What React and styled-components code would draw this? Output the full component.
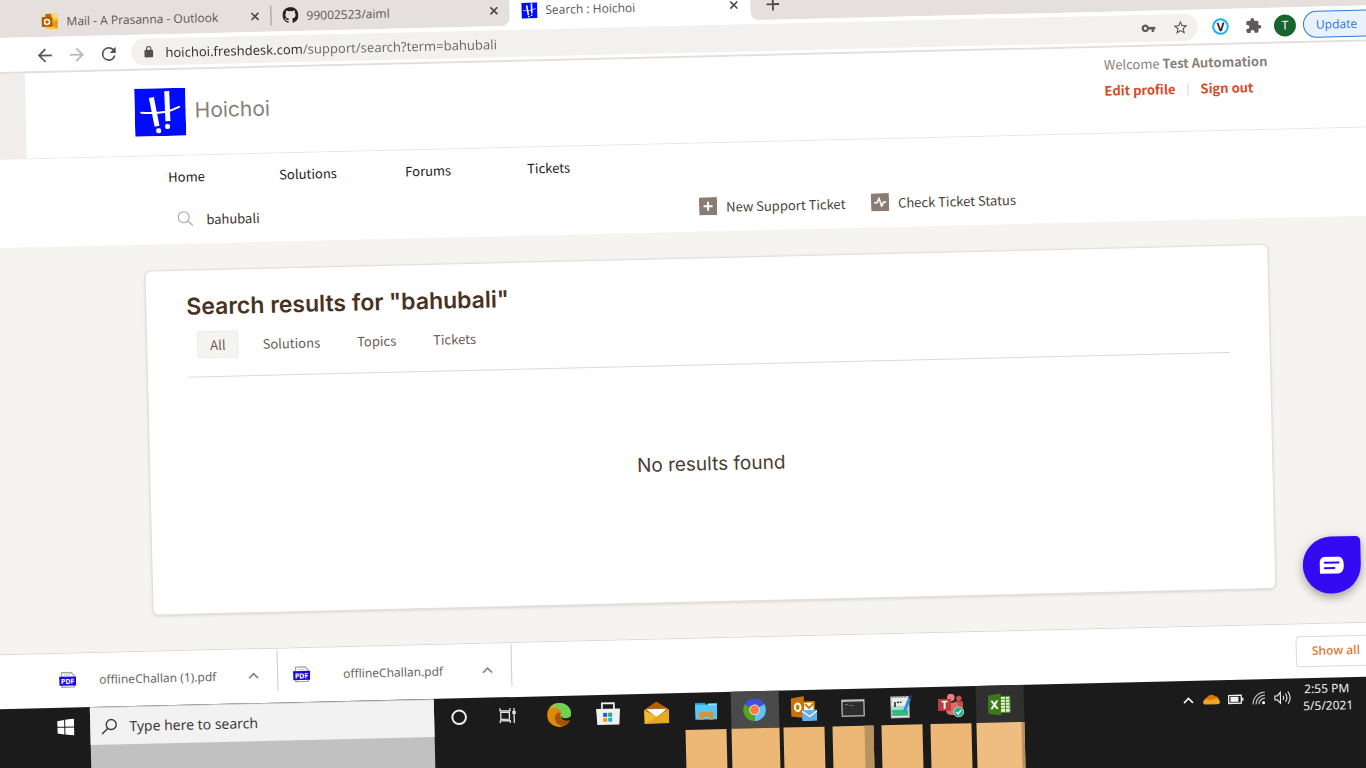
import React from "react";
import styled, { createGlobalStyle } from "styled-components";

const system = `"Noto Sans", "Open Sans", sans-serif`;
const caption = `"Open Sans", "Noto Sans", sans-serif`;
const body = `"Noto Sans CJK SC", "Noto Sans", sans-serif`;
const display = `Inter, Lato, sans-serif`;

const Global = createGlobalStyle`
  *, *::before, *::after { box-sizing: border-box; }
  html, body { margin: 0; height: 100%; overflow: hidden; }
  body { background: #fff; font-family: ${system}; }
  button, input { font: inherit; color: inherit; border: 0; padding: 0; margin: 0; background: none; outline: 0; }
  a { color: inherit; text-decoration: none; }
  h1, p, ul { margin: 0; padding: 0; }
  svg { display: block; flex: none; }
`;

const Desk = styled.div`
  height: 100vh;
  overflow: hidden;
`;

/* The desktop is tilted; it bleeds past the window so that no corner is bare. */
const Screen = styled.div`
  display: flex;
  flex-direction: column;
  width: calc(100% + 48px);
  height: calc(100vh + 40px);
  margin-left: -24px;
  transform: rotate(-1.36deg);
  transform-origin: 24px 0;
`;

/* ---------- browser chrome ---------- */

const TabStrip = styled.div`
  display: flex;
  height: 38px;
  background: #fff;
`;

const TabGroup = styled.div`
  display: flex;
  align-items: center;
  background: #e5e0de;
  height: 38px;
  padding-top: 6px;
  ${(p) => (p.$side === "left"
    ? "padding-left: 65px; width: 533px; border-bottom-right-radius: 8px;"
    : "flex: 1; padding-left: 14px; border-bottom-left-radius: 8px;")}
`;

const Tab = styled.div`
  display: flex;
  align-items: center;
  gap: 8px;
  width: ${(p) => p.$width}px;
  height: 32px;
  padding-right: 8px;
  font-family: ${caption};
  font-size: 12px;
  line-height: 13px;
  color: #5a5654;
`;

const ActiveTab = styled(Tab)`
  height: 38px;
  padding: 7px 9px 0 12px;
`;

const TabTitle = styled.span`
  flex: 1;
  white-space: nowrap;
`;

const TabRule = styled.span`
  width: 1px;
  height: 20px;
  margin-right: 11px;
  background: #999391;
`;

const IconButton = styled.button`
  display: grid;
  place-items: center;
  flex: none;
  width: ${(p) => p.$size || 16}px;
  height: ${(p) => p.$size || 16}px;
`;

const Toolbar = styled.div`
  display: flex;
  align-items: center;
  height: 36px;
  padding: 1px 8px 0 57px;
  border-bottom: 2px solid #e2dedc;
  background: #fff;
`;

const NavButtons = styled.div`
  display: flex;
  gap: 12px;
  width: 97px;
`;

const Omnibox = styled.label`
  display: flex;
  align-items: center;
  flex: 1;
  height: 27px;
  padding: 0 2px 0 11px;
  border-radius: 14px;
  background: #f3f1f0;
`;

const Address = styled.input`
  flex: 1;
  min-width: 0;
  margin-left: 10px;
  font-size: 13px;
  color: #555;
  background: linear-gradient(90deg, #333 138px, #6c6a68 138px);
  -webkit-background-clip: text;
  background-clip: text;
  -webkit-text-fill-color: transparent;
`;

const Extensions = styled.div`
  display: flex;
  align-items: center;
  gap: 6px;
  margin-left: 12px;
`;

const Avatar = styled.button`
  width: 22px;
  height: 22px;
  margin: 0 7px 0 4px;
  border-radius: 50%;
  background: #18652e;
  color: #fff;
  font-size: 12px;
  line-height: 22px;
`;

const UpdateButton = styled.button`
  width: 80px;
  height: 27px;
  padding-left: 12px;
  border: 1px solid #2d7be0;
  border-radius: 14px;
  background: #e9f2fc;
  color: #2a74dc;
  font-family: ${caption};
  font-size: 12px;
  text-align: left;
`;

/* ---------- help desk page ---------- */

const Gutter = styled.div`
  padding-left: 47px;
  background: #f0edeb;
`;

const Header = styled.header`
  display: flex;
  justify-content: space-between;
  height: 86px;
  padding: 0 130px 0 109px;
  border-bottom: 1px solid #e8e6e5;
  background: #fff;
  font-family: ${body};
`;

const Brand = styled.a`
  display: flex;
  align-items: flex-start;
  gap: 9px;
  padding-top: 18px;
  color: #8a8078;
  font-family: ${display};
  font-size: 21px;
  line-height: 46px;
`;

const Account = styled.div`
  width: 158px;
  padding-top: 5px;
  color: #8a8078;
  font-size: 13px;
  line-height: 24px;
  white-space: nowrap;
`;

const AccountLinks = styled.div`
  display: flex;
  align-items: center;
  gap: 12px;
  padding-top: 2px;
  color: #d84a26;
  font-weight: 700;
`;

const LinkRule = styled.span`
  width: 1px;
  height: 13px;
  background: #d9d4d2;
`;

const NavArea = styled.div`
  height: 88px;
  padding-left: 188px;
  background: #fff;
  font-family: ${body};
  font-size: 13px;
`;

const MainNav = styled.nav`
  display: grid;
  grid-template-columns: 111px 126px 122px auto;
  height: 42px;
  line-height: 42px;
  color: #1c1b1a;
`;

const SupportRow = styled.div`
  display: flex;
  align-items: center;
  height: 42px;
  padding-left: 8px;
  color: #4c3f36;
`;

const SiteSearch = styled.label`
  display: flex;
  align-items: center;
  gap: 13px;
  width: 522px;
`;

const SiteInput = styled.input`
  width: 300px;
  color: #3c322c;
`;

const SupportLink = styled.a`
  display: flex;
  align-items: center;
  gap: 9px;
  width: 172px;
  white-space: nowrap;
`;

const Main = styled.main`
  position: relative;
  display: flex;
  flex: 1;
  padding: 26px 128px 35px 162px;
  background: #f6f4f1;
`;

const Card = styled.section`
  display: flex;
  flex-direction: column;
  flex: 1;
  padding: 20px 40px;
  border: 1px solid #e2dedb;
  border-radius: 6px;
  background: #fff;
  box-shadow: 0 1px 3px rgba(70, 50, 40, 0.15);
`;

const Heading = styled.h1`
  color: #493222;
  font-family: ${display};
  font-size: 23px;
  font-weight: 600;
  line-height: 32px;
`;

const Filters = styled.div`
  display: flex;
  gap: 11px;
  padding: 9px 0 18px 10px;
  border-bottom: 1px solid #dcdad8;
`;

const Filter = styled.button`
  height: 27px;
  padding: 0 12px;
  border: 1px solid ${(p) => (p.$on ? "#edeae6" : "transparent")};
  border-radius: 2px;
  background: ${(p) => (p.$on ? "#f6f4f1" : "transparent")};
  color: #6a5a50;
  font-family: ${body};
  font-size: 13px;
  line-height: 25px;
`;

const Empty = styled.p`
  padding-top: 84px;
  color: #493b32;
  font-family: ${display};
  font-size: 19px;
  line-height: 30px;
  text-align: center;
`;

const ChatButton = styled.button`
  position: absolute;
  right: 43px;
  bottom: 29px;
  display: grid;
  place-items: center;
  width: 58px;
  height: 57px;
  border-radius: 29px 5px 29px 29px;
  background: #330af2;
  box-shadow: 0 4px 8px rgba(0, 0, 0, 0.3), 0 0 20px rgba(0, 0, 0, 0.08);
`;

/* ---------- download shelf ---------- */

const Shelf = styled.div`
  display: flex;
  align-items: center;
  height: 55px;
  padding: 0 8px 0 67px;
  border-top: 1px solid #dad6d4;
  background: #fff;
  color: #6a6664;
  font-family: ${caption};
  font-size: 12px;
`;

const Download = styled.div`
  display: flex;
  align-items: center;
  width: ${(p) => p.$width}px;
  height: 42px;
  margin-bottom: 10px;
  margin-right: 15px;
  padding: 8px 16px 0 0;
  border-right: 1px solid #cfcccb;
`;

const FileName = styled.a`
  flex: 1;
  padding-left: ${(p) => p.$inset}px;
  font-family: ${system};
  font-size: 12px;
  white-space: nowrap;
`;

const ShowAll = styled.button`
  width: 102px;
  height: 31px;
  margin-left: auto;
  padding: 0 0 2px 15px;
  border: 1px solid #dedad8;
  border-radius: 4px;
  color: #e2773f;
  font-weight: 600;
  line-height: 27px;
  text-align: left;
`;

/* ---------- task bar ---------- */

const Taskbar = styled.footer`
  display: flex;
  flex: none;
  height: 99px;
  background: #1b1b1b;
`;

const Start = styled.button`
  display: flex;
  align-items: center;
  width: 97px;
  height: 38px;
  padding-left: 64px;
`;

const FindBox = styled.div`
  width: 344px;
  padding-top: 1px;
  background: #c1c1c1;
`;

const FindField = styled.label`
  display: flex;
  align-items: center;
  gap: 12px;
  height: 37px;
  padding-left: 11px;
  background: #f2f2f2;
`;

const FindInput = styled.input`
  flex: 1;
  min-width: 0;
  font-size: 14px;
  &::placeholder { color: #3c3c3c; opacity: 1; }
`;

const Apps = styled.div`
  display: flex;
  margin-left: ${(p) => p.$lead || 0}px;
`;

const AppSlot = styled.div`
  display: flex;
  flex-direction: column;
  align-items: center;
  width: 49px;
`;

const AppButton = styled.button`
  display: grid;
  place-items: center;
  width: 48px;
  height: 37px;
  background: ${(p) => p.$tone || "transparent"};
`;

const Preview = styled.span`
  width: ${(p) => (p.$wide ? 48 : 41)}px;
  flex: 1;
  background: ${(p) => p.$tone || "#edb876"};
  border-right: ${(p) => p.$edge || 0}px solid #b9935f;
`;

const Tray = styled.div`
  display: flex;
  align-items: center;
  gap: 8px;
  height: 38px;
  margin-left: auto;
  padding-right: 56px;
  color: #eee;
`;

const Clock = styled.time`
  width: 48px;
  margin-left: 3px;
  font-size: 12px;
  line-height: 17px;
  text-align: center;
  white-space: nowrap;
`;

/* ---------- drawings ---------- */

const Svg = ({ s = 16, w, h, box, children, ...rest }) => (
  <svg width={w || s} height={h || s} viewBox={box || `0 0 ${w || s} ${h || s}`} fill="none" aria-hidden="true" {...rest}>
    {children}
  </svg>
);

const Letter = styled.text`
  font-family: ${system};
  font-weight: 700;
  text-anchor: middle;
`;

const Close = () => (
  <IconButton aria-label="Close tab">
    <Svg s={9} stroke="#4a4644" strokeWidth="1.600"><path d="M1 1l7 7M8 1l-7 7" /></Svg>
  </IconButton>
);

const HoichoiMark = ({ w, h }) => (
  <Svg w={w} h={h} box="0 0 51 48" preserveAspectRatio="none">
    <path fill="#000bff" d="M0 0h51v48H0z" />
    <g stroke="#fff">
      <path strokeWidth="5" d="M17 9l5 29M32.500 3l.5 30" />
      <path strokeWidth="2" strokeLinecap="round" d="M6.500 24c13 1.500 27 .5 38-5" />
    </g>
    <rect x="21" y="40" width="5" height="5" rx="2" fill="#fff" />
    <rect x="30" y="36" width="5" height="5" rx="2" fill="#fff" />
  </Svg>
);

const OutlookTab = () => (
  <Svg s={17} box="0 0 17 17">
    <path fill="#f3b72b" d="M4 1h12v11H4z" /><path fill="#b86a08" d="M4 1h6v4H4z" /><path fill="#ffd95e" d="M10 1h6v5h-6z" />
    <path fill="#e39712" d="M4 16l12-9v9z" /><path fill="#ffc83d" d="M4 9l12 7H4z" />
    <rect y="4" width="11" height="10" rx="1" fill="#b85c00" /><circle cx="5.500" cy="9" r="2.500" stroke="#fff" strokeWidth="1.500" />
  </Svg>
);

const GitHub = () => (
  <Svg s={16} box="0 0 16 16">
    <path fill="#24211f" d="M8 0C3.580 0 0 3.580 0 8c0 3.540 2.290 6.530 5.470 7.590.4.070.55-.17.55-.38 0-.19-.01-.82-.01-1.490-2.010.37-2.530-.49-2.690-.94-.09-.23-.48-.94-.82-1.130-.28-.15-.68-.52-.01-.53.63-.01 1.080.58 1.230.82.72 1.210 1.870.87 2.330.66.07-.52.28-.87.51-1.070-1.780-.2-3.640-.89-3.640-3.950 0-.87.31-1.590.82-2.150-.08-.2-.36-1.020.08-2.120 0 0 .67-.21 2.200.82a7.600 7.600 0 0 1 4 0c1.530-1.040 2.200-.82 2.200-.82.44 1.100.16 1.920.08 2.120.51.56.82 1.270.82 2.150 0 3.070-1.870 3.750-3.650 3.950.29.25.54.73.54 1.480 0 1.070-.01 1.930-.01 2.200 0 .21.15.46.55.38A8.010 8.010 0 0 0 16 8c0-4.420-3.580-8-8-8z" />
  </Svg>
);

const Arrow = ({ back }) => (
  <Svg s={21} box="0 0 24 24" fill={back ? "#5b5654" : "#bcb7b5"}>
    <path d={back ? "M20 11H7.830l5.590-5.590L12 4l-8 8 8 8 1.410-1.410L7.830 13H20z" : "M4 11h12.170l-5.590-5.590L12 4l8 8-8 8-1.410-1.410L16.170 13H4z"} />
  </Svg>
);

const Reload = () => (
  <Svg s={21} box="0 0 24 24" fill="#5b5654">
    <path d="M17.650 6.350A7.960 7.960 0 0 0 12 4a8 8 0 1 0 7.730 10h-2.080A6 6 0 1 1 12 6c1.660 0 3.140.69 4.220 1.780L13 11h7V4z" />
  </Svg>
);

const Lock = () => (
  <Svg s={13} box="0 0 24 24" fill="#55504e">
    <path fillRule="evenodd" d="M18 8h-1V6A5 5 0 0 0 7 6v2H6a2 2 0 0 0-2 2v10a2 2 0 0 0 2 2h12a2 2 0 0 0 2-2V10a2 2 0 0 0-2-2zM9 8V6a3 3 0 0 1 6 0v2z" />
  </Svg>
);

const KeyIcon = () => (
  <Svg s={15} box="0 0 24 24" fill="#5f5b58">
    <path fillRule="evenodd" d="M12.650 10A6 6 0 1 0 12.650 14H17v4h4v-4h2v-4H12.650zM7 14.500a2.500 2.500 0 1 1 0-5 2.500 2.500 0 0 1 0 5z" />
  </Svg>
);

const Star = () => (
  <Svg s={17} box="0 0 24 24" fill="#5f5b58">
    <path fillRule="evenodd" d="M22 9.240l-7.190-.62L12 2 9.190 8.630 2 9.240l5.460 4.730L5.820 21 12 17.270 18.180 21l-1.630-7.030zM12 15.400l-3.760 2.270 1-4.280-3.320-2.880 4.380-.38L12 6.100l1.710 4.040 4.380.38-3.320 2.880 1 4.280z" />
  </Svg>
);

const VBadge = () => (
  <Svg s={17} box="0 0 17 17">
    <circle cx="8.500" cy="8.500" r="7.300" fill="#fff" stroke="#16b4ee" strokeWidth="2" />
    <Letter x="8.500" y="13" fontSize="12" fill="#1f2430">V</Letter>
  </Svg>
);

const Puzzle = () => (
  <Svg s={17} box="0 0 24 24" fill="#5f5b58">
    <path d="M20.500 11H19V7a2 2 0 0 0-2-2h-4V3.500a2.500 2.500 0 0 0-5 0V5H4a2 2 0 0 0-2 2v3.800h1.500a2.700 2.700 0 0 1 0 5.400H2V20c0 1.100.9 2 2 2h3.800v-1.500a2.700 2.700 0 0 1 5.400 0V22H17a2 2 0 0 0 2-2v-4h1.500a2.500 2.500 0 0 0 0-5z" />
  </Svg>
);

const Glass = () => (
  <Svg s={16} stroke="#aaa5a3" strokeWidth="1.100"><circle cx="6.500" cy="6.500" r="5.500" /><path d="M10.500 10.500l5 4.500" /></Svg>
);

const PlusBox = () => (
  <Svg s={18}><path fill="#8a7c72" d="M0 0h18v18H0z" /><path d="M9 4.500v9M4.500 9h9" stroke="#fff" strokeWidth="2" /></Svg>
);

const PulseBox = () => (
  <Svg s={18}><path fill="#8a7c72" d="M0 0h18v18H0z" /><path d="M3 9.500h3l2-4.500 2.500 8 2-4h2.500" stroke="#fff" strokeWidth="1.600" strokeLinejoin="round" /></Svg>
);

const ChatGlyph = () => (
  <Svg w={26} h={18}>
    <path fill="#fff" d="M7 0h12c4 0 6 3 6 8.500S23 17 19 17H1V7c0-5 2-7 6-7z" />
    <path d="M6 6h14M6 11.500h9.500" stroke="#330af2" strokeWidth="2" strokeLinecap="round" />
  </Svg>
);

const Pdf = () => (
  <Svg w={17} h={17}>
    <path d="M2.500 5V1h9.500l3 3v1M2.500 13v2.500H15V13" stroke="#a9a6a5" strokeWidth="1.300" /><path d="M5 3.500h6" stroke="#c4c2c1" />
    <path fill="#1c0be0" d="M0 5h17v9H0z" />
    <Letter x="8.500" y="12.300" fontSize="7" fill="#fff">PDF</Letter>
  </Svg>
);

const Chevron = ({ color = "#85817f", size = 11 }) => (
  <Svg w={size} h={7} box="0 0 11 7" stroke={color} strokeWidth="1.700"><path d="M1 6l4.500-4.500L10 6" /></Svg>
);

const Windows = () => (
  <Svg s={17} fill="#fff"><path d="M0 2.300L7 1.300v6.700H0zM8 1.200L17 0v8H8zM0 9h7v6.700l-7-1zM8 9h9v8l-9-1.200z" /></Svg>
);

const FindGlyph = () => (
  <Svg s={16} stroke="#3a3a3a" strokeWidth="1.400"><circle cx="10" cy="6" r="5" /><path d="M6.500 9.500L.5 15.500" /></Svg>
);

const Cortana = () => <Svg s={18}><circle cx="9" cy="9" r="6.800" stroke="#f1f1f1" strokeWidth="2" /></Svg>;

const TaskView = () => (
  <Svg s={17} stroke="#e6e6e6" strokeWidth="1.300">
    <path d="M1 1v2.500h10V1M1 16v-2.500h10V16M1.700 5h8.600v7H1.700zM15 1v15" /><path fill="#e6e6e6" stroke="none" d="M13.300 4h3.400v3h-3.400z" />
  </Svg>
);

const Edge = () => (
  <Svg s={24}>
    <circle cx="12" cy="12" r="12" fill="#de890b" />
    <path fill="#b4b535" d="M2 5.500C5.500 0 13-2 19 2.500L15 8C12 4.500 7 4 2 5.500z" />
    <path fill="#6fd150" d="M9 1.500C17-2 24 4 24 10.500c0 4-3 5-6 5-3.500 0-5-1.500-4-4C15 8 12 4.500 7 4z" />
    <path fill="#a65306" d="M9 11c-3 5 0 12 7 12.200 3-1 5.500-3 7-5.700-5 2-10 0-10-5 0-1 .5-2 1-2.500-2-.5-4 0-5 1z" />
    <path fill="#1b1b1b" d="M14 12c-1 5 4.500 7.500 9 5.300L25 18v-6.500c-1 3-4 4-7 4-3 0-4.300-1.500-4-3.500z" />
  </Svg>
);

const Store = () => (
  <Svg w={24} h={24}>
    <path d="M6 8V1.500h12V8" stroke="#f2f2f2" strokeWidth="1.700" /><path fill="#f2f2f2" d="M0 7h24l-1 16H1z" />
    <path fill="#1d5bf0" d="M7 11h4v4H7z" /><path fill="#11b765" d="M12 11h4v4h-4z" /><path fill="#f29b14" d="M7 16h4v4H7z" /><path fill="#14b3ee" d="M12 16h4v4h-4z" />
  </Svg>
);

const Mail = () => (
  <Svg w={25} h={22}>
    <path fill="#b45e04" d="M0 8l12.500-8L25 8v4H0z" /><path fill="#fff" d="M2 7.500h21L12.500 16z" />
    <path fill="#f3bb2f" d="M0 8l12.500 7L25 8v14H0z" /><path fill="#dd9a17" d="M25 8v14L0 22z" opacity=".55" />
  </Svg>
);

const Explorer = () => (
  <Svg w={22} h={18}>
    <path fill="#159ddc" d="M0 0h10l1 3H0z" /><path fill="#56c8f5" d="M0 2h22v15H0z" /><path fill="#8edefb" d="M13 1h9v2h-9z" />
    <path fill="#d2953e" d="M4 17.500V9.500h14v8h-4v-3H8v3z" />
  </Svg>
);

const Chrome = () => (
  <Svg s={23}>
    <path fill="#4150dd" d="M11.500 11.500L1.500 6a11.500 11.500 0 0 1 20 0z" /><path fill="#5cc3f8" d="M11.500 11.500L21.400 6a11.500 11.500 0 0 1-10 17z" />
    <path fill="#52a51d" d="M11.500 11.500L11.300 23A11.500 11.500 0 0 1 1.600 6z" /><circle cx="11.500" cy="11.500" r="5.300" fill="#f0e8e4" /><circle cx="11.500" cy="11.500" r="4.500" fill="#ff7b42" />
  </Svg>
);

const Outlook = () => (
  <Svg w={26} h={25}>
    <path fill="#fff" stroke="#d27e09" strokeWidth="1.500" d="M12 6h11v11H12z" /><path d="M14 8l4 4 5-5" stroke="#d27e09" strokeWidth="2" />
    <path fill="#cc7205" d="M0 2l13-2v22L0 20z" /><ellipse cx="6.700" cy="11" rx="2.800" ry="3.700" stroke="#fff" strokeWidth="2" />
    <path fill="#65aeea" d="M11 14h15v11H11z" /><path d="M11 15l7.500 5.500L26 15" stroke="#fff" strokeWidth="1.300" />
  </Svg>
);

const Terminal = () => (
  <Svg w={24} h={18}>
    <path fill="#2c2d2e" stroke="#a5a5a5" strokeWidth="1.500" d="M1 1h22v16H1z" /><path stroke="#e8e8e8" d="M1 2h22" />
    <path d="M4 5.500h3M8 6.500h1M10 6.500h2" stroke="#777" />
  </Svg>
);

const Notepad = () => (
  <Svg w={23} h={24}>
    <path fill="#e9eeea" stroke="#aaa" d="M1 2h18v21H1z" /><path fill="#31bd82" d="M2 14h16v7H2z" /><path fill="#a8e2c5" d="M2 11h16v4H2z" />
    <path d="M3 1v2M6 1v2M9 1v2M12 1v2M15 1v2" stroke="#777" /><path d="M5 7v5M7 7.500h2M10 7.500h1.500" stroke="#222" strokeWidth="1.500" />
    <path d="M20 3l-6 14" stroke="#2b92da" strokeWidth="3" /><path d="M21.500.5L20 4" stroke="#302a68" strokeWidth="3" />
  </Svg>
);

const Teams = () => (
  <Svg w={26} h={24}>
    <circle cx="13" cy="4" r="3.800" fill="#e8807b" /><circle cx="21" cy="5" r="2.800" fill="#c85250" />
    <path fill="#c94d4c" d="M16 8h9v8c0 4-5 5-8 3z" /><path fill="#dc6b68" d="M8 9h12v8c0 6-12 6-12 0z" />
    <path fill="#b93e40" d="M0 5h13v12H0z" /><Letter x="6.500" y="15" fontSize="11" fill="#fff">T</Letter>
    <circle cx="20.500" cy="18.500" r="5" fill="#16b584" stroke="#f3d7d5" strokeWidth=".8" /><path d="M18 18.500l2 2 3.200-4" stroke="#fff" strokeWidth="1.500" />
  </Svg>
);

const Excel = () => (
  <Svg w={23} h={22}>
    <path fill="#e6efdc" stroke="#4c8b22" d="M12 3h10v16H12z" /><path d="M17.500 3v16" stroke="#4c8b22" /><path d="M13 6h9M13 9h9M13 12h9M13 15h9" stroke="#4c8b22" strokeWidth=".8" />
    <path fill="#3d7819" d="M0 2l13-2v22L0 20z" /><Letter x="6.500" y="15.500" fontSize="12" fill="#fff">X</Letter>
  </Svg>
);

const Cloud = () => (
  <Svg w={17} h={12}><path fill="#d97a05" d="M1 9a4 4 0 0 1 3-5 5 5 0 0 1 8-1c3 0 5 3 4 6z" /><path fill="#efa52a" d="M0 8c3-3 5-3 7-1l3-1c3-2 7 0 7 3 0 1-1 2-3 2H3C1 11 0 10 0 8z" /></Svg>
);

const Battery = () => (
  <Svg w={16} h={11}><path d="M.7 1.500h12.600v8H.7z" stroke="#f3f3f3" strokeWidth="1.300" /><path fill="#f3f3f3" d="M2.500 3h8v5h-8zM14 4h1.500v3H14z" /></Svg>
);

const Wifi = () => (
  <Svg s={14} stroke="#bdbdbd" strokeWidth="1.200"><path d="M1 13A12 12 0 0 1 13 1M4 13a9 9 0 0 1 9-9M7 13a6 6 0 0 1 6-6" /><circle cx="11.500" cy="11.500" r="1.500" fill="#fff" stroke="none" /></Svg>
);

const Volume = () => (
  <Svg w={18} h={14} stroke="#ededed" strokeWidth="1.100"><path d="M1 5h2.500l3-3.500v11l-3-3.500H1zM9 5q1.500 2 0 4M11.500 3q3 4 0 8M14 1q4.500 6 0 12" /></Svg>
);

const runningApps = [
  { name: "Edge", icon: Edge },
  { name: "Store", icon: Store },
  { name: "Mail", icon: Mail },
  { name: "File Explorer", icon: Explorer, preview: {} },
  { name: "Chrome", icon: Chrome, tone: "#4a4a4a", preview: { $wide: true } },
  { name: "Outlook", icon: Outlook, preview: {} },
  { name: "Command Prompt", icon: Terminal, preview: { $edge: 9 } },
  { name: "Notepad", icon: Notepad, preview: {} },
  { name: "Teams", icon: Teams, preview: {} },
  { name: "Excel", icon: Excel, tone: "#303030", preview: { $wide: true, $edge: 3, $tone: "#efbd7f" } },
];

export default function App() {
  return (
    <Desk>
      <Global />
      <Screen>
        <TabStrip>
          <TabGroup $side="left">
            <Tab $width={229}><OutlookTab /><TabTitle>Mail - A Prasanna - Outlook</TabTitle><Close /></Tab>
            <TabRule />
            <Tab $width={227}><GitHub /><TabTitle>99002523/aiml</TabTitle><Close /></Tab>
          </TabGroup>
          <ActiveTab $width={241}><HoichoiMark w={16} h={16} /><TabTitle>Search : Hoichoi</TabTitle><Close /></ActiveTab>
          <TabGroup $side="right">
            <IconButton aria-label="New tab"><Svg s={13} stroke="#4a4644" strokeWidth="1.800"><path d="M6.500 0v13M0 6.500h13" /></Svg></IconButton>
          </TabGroup>
        </TabStrip>

        <Toolbar>
          <NavButtons>
            <IconButton $size={20} aria-label="Back"><Arrow back /></IconButton>
            <IconButton $size={20} aria-label="Forward"><Arrow /></IconButton>
            <IconButton $size={20} aria-label="Reload"><Reload /></IconButton>
          </NavButtons>
          <Omnibox>
            <Lock />
            <Address aria-label="Address" defaultValue="hoichoi.freshdesk.com/support/search?term=bahubali" />
            <IconButton $size={32} aria-label="Passwords"><KeyIcon /></IconButton>
            <IconButton $size={32} aria-label="Bookmark"><Star /></IconButton>
          </Omnibox>
          <Extensions>
            <IconButton $size={20} aria-label="Extension"><VBadge /></IconButton>
            <IconButton $size={34} aria-label="Extensions"><Puzzle /></IconButton>
          </Extensions>
          <Avatar>T</Avatar>
          <UpdateButton>Update</UpdateButton>
        </Toolbar>

        <Gutter>
          <Header>
            <Brand href="#"><HoichoiMark w={51} h={48} />Hoichoi</Brand>
            <Account>
              Welcome <b>Test Automation</b>
              <AccountLinks><a href="#">Edit profile</a><LinkRule /><a href="#">Sign out</a></AccountLinks>
            </Account>
          </Header>
        </Gutter>

        <NavArea>
          <MainNav>
            <a href="#">Home</a><a href="#">Solutions</a><a href="#">Forums</a><a href="#">Tickets</a>
          </MainNav>
          <SupportRow>
            <SiteSearch><Glass /><SiteInput aria-label="Search" defaultValue="bahubali" /></SiteSearch>
            <SupportLink href="#"><PlusBox />New Support Ticket</SupportLink>
            <SupportLink href="#"><PulseBox />Check Ticket Status</SupportLink>
          </SupportRow>
        </NavArea>

        <Main>
          <Card>
            <Heading>Search results for "bahubali"</Heading>
            <Filters>
              <Filter $on>All</Filter><Filter>Solutions</Filter><Filter>Topics</Filter><Filter>Tickets</Filter>
            </Filters>
            <Empty>No results found</Empty>
          </Card>
          <ChatButton aria-label="Chat"><ChatGlyph /></ChatButton>
        </Main>

        <Shelf>
          <Download $width={219}><Pdf /><FileName href="#" $inset={23}>offlineChallan (1).pdf</FileName><IconButton aria-label="Options"><Chevron /></IconButton></Download>
          <Download $width={219}><Pdf /><FileName href="#" $inset={33}>offlineChallan.pdf</FileName><IconButton aria-label="Options"><Chevron /></IconButton></Download>
          <ShowAll>Show all</ShowAll>
        </Shelf>

        <Taskbar>
          <Start aria-label="Start"><Windows /></Start>
          <FindBox>
            <FindField><FindGlyph /><FindInput aria-label="Search" placeholder="Type here to search" /></FindField>
          </FindBox>
          <Apps>
            <AppSlot><AppButton aria-label="Cortana"><Cortana /></AppButton></AppSlot>
            <AppSlot><AppButton aria-label="Task view"><TaskView /></AppButton></AppSlot>
          </Apps>
          <Apps $lead={2}>
            {runningApps.map(({ name, icon: Icon, tone, preview }) => (
              <AppSlot key={name}>
                <AppButton aria-label={name} $tone={tone}><Icon /></AppButton>
                {preview && <Preview {...preview} />}
              </AppSlot>
            ))}
          </Apps>
          <Tray>
            <Chevron color="#f0f0f0" size={13} />
            <Cloud />
            <Battery />
            <Wifi />
            <Volume />
            <Clock>2:55 PM<br />5/5/2021</Clock>
          </Tray>
        </Taskbar>
      </Screen>
    </Desk>
  );
}
